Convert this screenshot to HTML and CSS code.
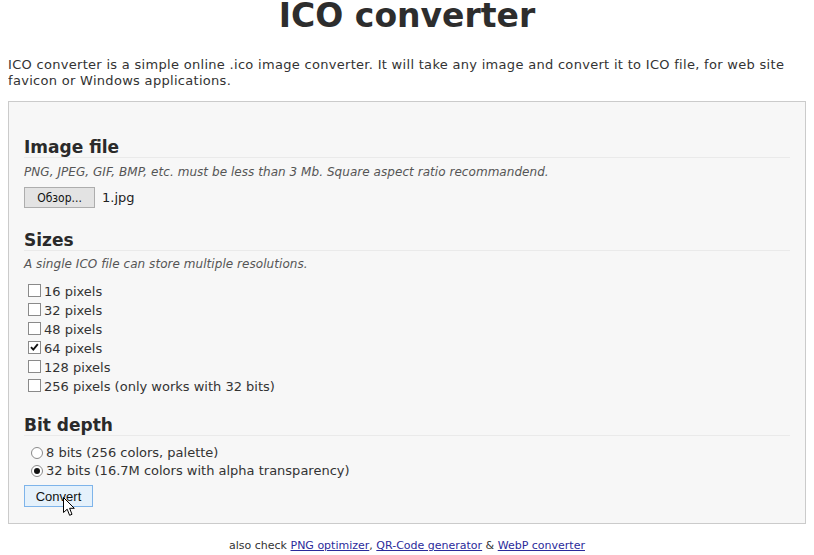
FILE: index.html
```html
<!DOCTYPE html>
<html lang="en">
<head>
<meta charset="utf-8">
<title>ICO converter</title>
<link rel="stylesheet" href="styles.css">
</head>
<body>
<h1 class="title">ICO converter</h1>
<p class="intro">ICO converter is a simple online .ico image converter. It will take any image and convert it to ICO file, for web site favicon or Windows applications.</p>
<form class="panel">
  <section class="group group-file">
    <h2 class="group-title">Image file</h2>
    <p class="hint hint-file">PNG, JPEG, GIF, BMP, etc. must be less than 3 Mb. Square aspect ratio recommandend.</p>
    <div class="file-row">
      <span class="btn btn-browse">Обзор...</span>
      <span class="file-name">1.jpg</span>
    </div>
  </section>
  <section class="group group-sizes">
    <h2 class="group-title">Sizes</h2>
    <p class="hint hint-sizes">A single ICO file can store multiple resolutions.</p>
    <ul class="options">
      <li class="option"><span class="cb"></span>16 pixels</li>
      <li class="option"><span class="cb"></span>32 pixels</li>
      <li class="option"><span class="cb"></span>48 pixels</li>
      <li class="option"><span class="cb"><svg class="tick" viewBox="0 0 11 11" width="11" height="11"><path d="M2 5.2 L4.3 7.6 L8.8 2.2" fill="none" stroke="#111" stroke-width="1.9"/></svg></span>64 pixels</li>
      <li class="option"><span class="cb"></span>128 pixels</li>
      <li class="option"><span class="cb"></span>256 pixels (only works with 32 bits)</li>
    </ul>
  </section>
  <section class="group group-depth">
    <h2 class="group-title">Bit depth</h2>
    <ul class="options options-radio">
      <li class="option option-radio"><span class="rb"></span>8 bits (256 colors, palette)</li>
      <li class="option option-radio"><span class="rb rb-on"><span class="rb-dot"></span></span>32 bits (16.7M colors with alpha transparency)</li>
    </ul>
    <div class="submit-row">
      <span class="btn btn-convert">Convert</span>
      <svg class="cursor" viewBox="0 0 13 20" width="13" height="20"><path d="M0.5 0.5 L0.5 15.5 L4.2 12.2 L6.6 18.3 L9 17.3 L6.6 11.3 L11.3 11.3 Z" fill="#fff" stroke="#000" stroke-width="1" stroke-linejoin="miter"/></svg>
    </div>
  </section>
</form>
<p class="footer">also check <a href="#">PNG optimizer</a>, <a href="#">QR-Code generator</a> &amp; <a href="#">WebP converter</a></p>
</body>
</html>
```
FILE: styles.css
```css
html { background: #fff; }
body {
  margin: 0 8px;
  font-family: "DejaVu Sans", Verdana, sans-serif;
  color: #333;
}
.title {
  margin: 0;
  font: bold 33px/32px "DejaVu Sans", sans-serif;
  text-align: center;
  color: #2d2d2d;
}
.intro {
  margin: 25px 0 12px;
  font: 13px/16px "DejaVu Sans", sans-serif;
  letter-spacing: 0.3px;
  color: #333;
}
.panel {
  margin: 0;
  border: 1px solid #cbcbcb;
  background: #f7f7f7;
  padding: 36px 15px 16px 15px;
}
.group-title {
  margin: 0;
  font: bold 17px/19px "DejaVu Sans", sans-serif;
  color: #2a2a2a;
  border-bottom: 1px solid #eaeaea;
}
.group-sizes { margin-top: 23px; }
.group-depth { margin-top: 20px; }
.hint {
  margin: 0;
  font: italic 12px/14px "DejaVu Sans", sans-serif;
  letter-spacing: 0.05px;
  color: #555;
}
.hint-file { margin-top: 7px; }
.hint-sizes { margin-top: 6px; }
.file-row {
  margin-top: 8px;
  display: flex;
  align-items: center;
  gap: 7px;
}
.btn {
  box-sizing: border-box;
  display: inline-flex;
  align-items: center;
  justify-content: center;
  height: 21px;
  color: #111;
}
.btn-browse {
  width: 71px;
  background: #e3e3e3;
  border: 1px solid #adadad;
  font: 12px "DejaVu Sans Condensed", "DejaVu Sans", sans-serif;
  padding-top: 1px;
}
.file-name {
  font: 13px "DejaVu Sans", sans-serif;
  color: #222;
}
.options {
  list-style: none;
  margin: 11px 0 0;
  padding: 0 0 0 4px;
}
.options-radio { margin-top: 8px; padding-left: 7px; }
.option {
  display: flex;
  align-items: flex-start;
  font: 13px/19px "DejaVu Sans", sans-serif;
  color: #333;
}
.option-radio { line-height: 18px; }
.cb {
  box-sizing: border-box;
  width: 13px;
  height: 13px;
  margin: 2px 3px 0 0;
  border: 1px solid #8a8a8a;
  background: #fff;
  display: flex;
  align-items: center;
  justify-content: center;
}
.tick { display: block; }
.rb {
  box-sizing: border-box;
  width: 12px;
  height: 12px;
  margin: 3px 3px 0 0;
  border: 1px solid #8a8a8a;
  border-radius: 50%;
  background: #fff;
  display: flex;
  align-items: center;
  justify-content: center;
}
.rb-dot {
  width: 6px;
  height: 6px;
  border-radius: 50%;
  background: #111;
}
.submit-row {
  position: relative;
  margin-top: 5px;
  display: flex;
}
.btn-convert {
  width: 69px;
  height: 22px;
  background: #e5f1fb;
  border: 1px solid #7eb4ea;
  font: 13px "Liberation Sans", Arial, sans-serif;
}
.cursor {
  position: absolute;
  left: 39px;
  top: 12px;
}
.footer {
  margin: 15px 0 0;
  text-align: center;
  font: 11px/14px "DejaVu Sans", sans-serif;
  color: #333;
}
.footer a {
  color: #2b2b9b;
  text-decoration: underline;
}
```
